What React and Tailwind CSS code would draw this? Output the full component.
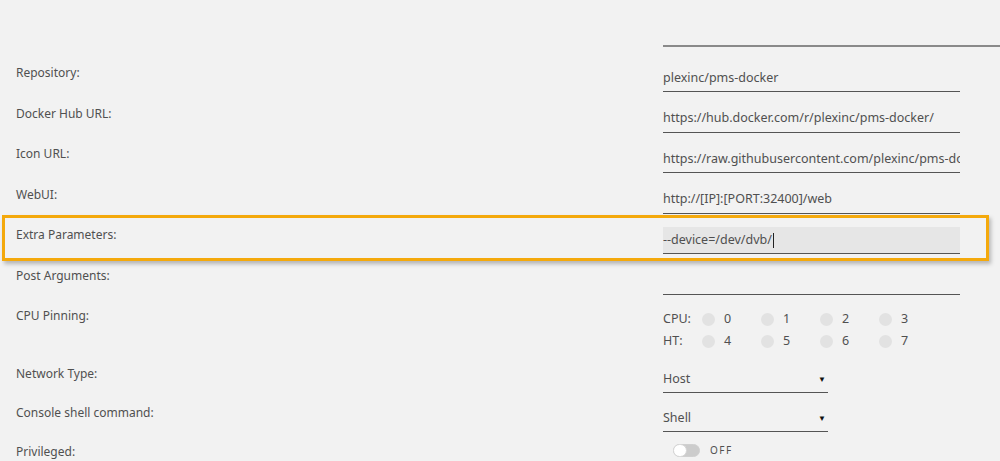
import React from "react";

const font = { fontFamily: '"Noto Sans", "Open Sans", Arial, sans-serif' };

function Row({ label, value, highlight, extraBg, cursor }) {
  return (
    <div className="relative flex h-[40.5px]">
      {highlight && (
        <div className="pointer-events-none absolute left-[2px] right-[11px] top-[-3px] bottom-[-2px] border-[3px] border-[#f4a90c] shadow-[2px_3px_4px_rgba(0,0,0,0.25)]" />
      )}
      <div className="w-[663px] shrink-0 pl-4 pt-[9px] text-[12px] leading-4 text-[#505050]">{label}</div>
      <div
        className={`mt-[9px] flex h-[27px] w-[297px] items-center border-b border-[#555] text-[12.5px] text-[#505050] whitespace-nowrap overflow-hidden ${extraBg ? "bg-[#e6e6e6]" : ""}`}
      >
        <span>{value}</span>
        {cursor && <span className="ml-[1px] inline-block h-[15px] w-[1px] bg-[#222]" />}
      </div>
    </div>
  );
}

function Cpu({ n }) {
  return (
    <div className="flex w-[59px] items-center">
      <span className="h-[13px] w-[13px] rounded-full bg-[#e2e2e2]" />
      <span className="ml-[9px] text-[12.5px] text-[#505050]">{n}</span>
    </div>
  );
}

function Select({ value }) {
  return (
    <div className="mt-[9px] flex h-[27px] w-[165px] items-center justify-between border-b border-[#555] pr-[2px] text-[12.5px] text-[#505050]">
      <span>{value}</span>
      <span className="text-[8px] text-[#111]">▼</span>
    </div>
  );
}

export default function App() {
  return (
    <div className="h-[461px] w-[1000px] overflow-hidden bg-[#f2f2f2]" style={font}>
      <div className="h-[45px]" />
      <div className="ml-[663px] h-[2px] bg-[#8a8a8a]" />
      <div className="h-[9px]" />
      <Row label="Repository:" value="plexinc/pms-docker" />
      <Row label="Docker Hub URL:" value="https://hub.docker.com/r/plexinc/pms-docker/" />
      <Row label="Icon URL:" value="https://raw.githubusercontent.com/plexinc/pms-docker/master/img/plex-icon.png" />
      <Row label="WebUI:" value="http://[IP]:[PORT:32400]/web" />
      <Row label="Extra Parameters:" value="--device=/dev/dvb/" highlight extraBg cursor />
      <Row label="Post Arguments:" value="" />
      <div className="flex h-[58px]">
        <div className="w-[663px] shrink-0 pl-4 pt-[9px] text-[12px] leading-4 text-[#505050]">CPU Pinning:</div>
        <div className="mt-[9px] flex flex-col">
          <div className="flex h-[22px] items-center">
            <span className="w-[39px] text-[12.5px] text-[#505050]">CPU:</span>
            <Cpu n="0" />
            <Cpu n="1" />
            <Cpu n="2" />
            <Cpu n="3" />
          </div>
          <div className="flex h-[22px] items-center">
            <span className="w-[39px] text-[12.5px] text-[#505050]">HT:</span>
            <Cpu n="4" />
            <Cpu n="5" />
            <Cpu n="6" />
            <Cpu n="7" />
          </div>
        </div>
      </div>
      <div className="flex h-[39px]">
        <div className="w-[663px] shrink-0 pl-4 pt-[9px] text-[12px] leading-4 text-[#505050]">Network Type:</div>
        <Select value="Host" />
      </div>
      <div className="flex h-[39px]">
        <div className="w-[663px] shrink-0 pl-4 pt-[9px] text-[12px] leading-4 text-[#505050]">Console shell command:</div>
        <Select value="Shell" />
      </div>
      <div className="flex h-[39px]">
        <div className="w-[663px] shrink-0 pl-4 pt-[9px] text-[12px] leading-4 text-[#505050]">Privileged:</div>
        <div className="ml-[10px] mt-[9px] flex h-[13px] items-center">
          <div className="relative h-[13px] w-[27px] rounded-full border border-[#d0d0d0] bg-[#cccccc]">
            <span className="absolute left-[-1px] top-[-1px] h-[13px] w-[14px] rounded-full border border-[#d6d6d6] bg-white" />
          </div>
          <span className="ml-[10px] text-[10px] tracking-[1.5px] text-[#505050]">OFF</span>
        </div>
      </div>
    </div>
  );
}
